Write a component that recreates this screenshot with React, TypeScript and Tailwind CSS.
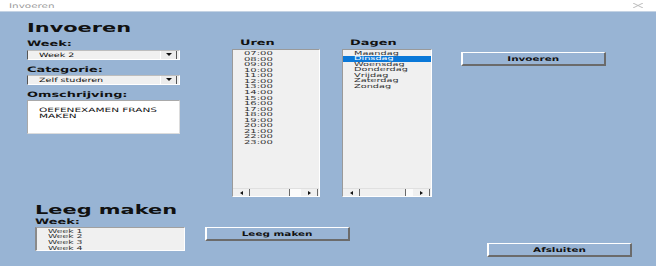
import React from "react";

const hours = ["07:00","08:00","09:00","10:00","11:00","12:00","13:00","14:00","15:00","16:00","17:00","18:00","19:00","20:00","21:00","22:00","23:00"];
const days = ["Maandag","Dinsdag","Woensdag","Donderdag","Vrijdag","Zaterdag","Zondag"];
const weeks = ["Week 1","Week 2","Week 3","Week 4"];

function Label({ children }: { children: React.ReactNode }) {
  return (
    <div className="h-[8px] text-[7.5px] leading-[8px] font-bold text-[#111] whitespace-nowrap">
      <span className="inline-block origin-left scale-x-[1.72]">{children}</span>
    </div>
  );
}

function Heading({ children }: { children: React.ReactNode }) {
  return (
    <div className="h-[12px] text-[12px] leading-[12px] font-bold text-[#111] whitespace-nowrap">
      <span className="inline-block origin-left scale-x-[1.74]">{children}</span>
    </div>
  );
}

function DownArrow() {
  return (
    <svg width="6" height="3" viewBox="0 0 6 3"><path d="M0 0H6L3 3Z" fill="#111" /></svg>
  );
}

function Combo({ value }: { value: string }) {
  return (
    <div className="w-[153px] h-[10px] flex bg-[#f0f0f0] border-t border-l border-t-[#bdbdbd] border-l-[#555] border-b border-b-white border-r border-r-white">
      <div className="flex-1 pl-[11px] text-[6px] leading-[8px] text-[#111] whitespace-nowrap">
        <span className="inline-block origin-left scale-x-[1.6]">{value}</span>
      </div>
      <div className="w-[17px] h-full flex items-center justify-center bg-[#ececec] border-l border-l-white border-r border-r-[#555]">
        <DownArrow />
      </div>
      <div className="w-[2px]" />
    </div>
  );
}

function LeftArrow() {
  return <svg width="3" height="4" viewBox="0 0 3 4"><path d="M3 0V4L0 2Z" fill="#111" /></svg>;
}
function RightArrow() {
  return <svg width="3" height="4" viewBox="0 0 3 4"><path d="M0 0V4L3 2Z" fill="#111" /></svg>;
}

function HScroll({ track }: { track: "uren" | "dagen" }) {
  return (
    <div className="h-[8px] flex border-t border-t-[#e0e0e0]">
      <div className="w-[17px] flex items-center justify-center bg-[#f0f0f0] border-r border-r-[#6a6a6a]"><LeftArrow /></div>
      <div className={track === "uren" ? "w-[40px] bg-[#f0f0f0] border-r border-r-[#6a6a6a]" : "w-[46px] bg-[#f0f0f0] border-r border-r-[#6a6a6a]"} />
      <div className="flex-1 bg-[#fbfbfb]" />
      <div className="w-[17px] flex items-center justify-center bg-[#f0f0f0] border-r border-r-[#6a6a6a]"><RightArrow /></div>
      <div className="w-[1px]" />
    </div>
  );
}

function Button({ children }: { children: React.ReactNode }) {
  return (
    <div className="w-[145px] h-[14px] flex items-center justify-center bg-[#99b4d4] border-t border-t-white border-l-2 border-l-white border-r-2 border-r-[#6b6b6b] border-b-2 border-b-[#6b6b6b]">
      <span className="inline-block origin-center scale-x-[1.6] text-[6.5px] leading-[8px] font-bold text-[#111] whitespace-nowrap">{children}</span>
    </div>
  );
}

export default function App() {
  return (
    <div className="w-[656px] h-[266px] overflow-hidden flex flex-col bg-[#98b4d4] font-['DejaVu_Sans',sans-serif]">
      {/* title bar */}
      <div className="h-[12px] shrink-0 bg-white border-b border-b-[#c4d3e4] flex items-center justify-between pl-[9px] pr-[13px]">
        <span className="inline-block origin-left scale-x-[1.6] text-[6.5px] leading-[10px] text-[#9a9a9a] whitespace-nowrap">Invoeren</span>
        <svg width="10" height="5" viewBox="0 0 10 5"><path d="M0 0L10 5M10 0L0 5" stroke="#b5b5b5" strokeWidth="0.9" /></svg>
      </div>

      {/* top section */}
      <div className="flex items-start pl-[27px]">
        <div className="w-[153px] mt-[9.5px] flex flex-col">
          <Heading>Invoeren</Heading>
          <div className="mt-[6px]"><Label>Week:</Label></div>
          <div className="mt-[2px]"><Combo value="Week 2" /></div>
          <div className="mt-[6px]"><Label>Categorie:</Label></div>
          <div className="mt-[1px]"><Combo value="Zelf studeren" /></div>
          <div className="mt-[6px]"><Label>Omschrijving:</Label></div>
          <div className="mt-[1px] h-[34px] bg-white border border-t-[#a9a9a9] border-l-[#a9a9a9] border-r-[#dcdcdc] border-b-[#dcdcdc] pl-[11px] pt-[6.5px] text-[6px] leading-[5.7px] text-[#111] whitespace-nowrap">
            <div><span className="inline-block origin-left scale-x-[1.75]">OEFENEXAMEN FRANS</span></div>
            <div><span className="inline-block origin-left scale-x-[1.75]">MAKEN</span></div>
          </div>
        </div>

        {/* Uren */}
        <div className="ml-[52px] mt-[26.5px] flex flex-col">
          <div className="pl-[8px]"><Label>Uren</Label></div>
          <div className="mt-[2.5px] w-[88px] h-[148px] flex flex-col bg-[#f0f0f0] border border-t-[#9a9a9a] border-l-[#9a9a9a] border-r-white border-b-white">
            <div className="flex-1 pt-[1px] pl-[11px] text-[5.5px] leading-[5.56px] text-[#333] whitespace-nowrap">
              {hours.map((h) => (
                <div key={h}><span className="inline-block origin-left scale-x-[1.82]">{h}</span></div>
              ))}
            </div>
            <HScroll track="uren" />
          </div>
        </div>

        {/* Dagen */}
        <div className="ml-[22px] mt-[26.5px] flex flex-col">
          <div className="pl-[8px]"><Label>Dagen</Label></div>
          <div className="mt-[2.5px] w-[90px] h-[148px] flex flex-col bg-[#f0f0f0] border border-t-[#9a9a9a] border-l-[#9a9a9a] border-r-white border-b-white">
            <div className="flex-1 pt-[0.5px] text-[5.5px] leading-[5.56px] text-[#333] whitespace-nowrap">
              {days.map((d) => (
                <div key={d} className={d === "Dinsdag" ? "pl-[11px] bg-[#0a78d8] text-white" : "pl-[11px]"}>
                  <span className="inline-block origin-left scale-x-[1.77]">{d}</span>
                </div>
              ))}
            </div>
            <HScroll track="dagen" />
          </div>
        </div>

        <div className="ml-[29px] mt-[40px]">
          <Button>Invoeren</Button>
        </div>
      </div>

      {/* bottom section */}
      <div className="flex items-start pl-[35px] mt-[7px]">
        <div className="w-[150px] flex flex-col">
          <Heading>Leeg maken</Heading>
          <div className="mt-[2px]"><Label>Week:</Label></div>
          <div className="mt-[1px] h-[24px] bg-[#f0f0f0] border border-t-[#a0a0a0] border-l-2 border-l-[#8a8a8a] border-r-white border-b-white pl-[11px] pt-[0.5px] text-[5.5px] leading-[5.78px] text-[#333] whitespace-nowrap">
            {weeks.map((w) => (
              <div key={w}><span className="inline-block origin-left scale-x-[1.7]">{w}</span></div>
            ))}
          </div>
        </div>
        <div className="ml-[20px] mt-[23px]">
          <Button>Leeg maken</Button>
        </div>
        <div className="ml-[137px] mt-[39px]">
          <Button>Afsluiten</Button>
        </div>
      </div>
    </div>
  );
}
